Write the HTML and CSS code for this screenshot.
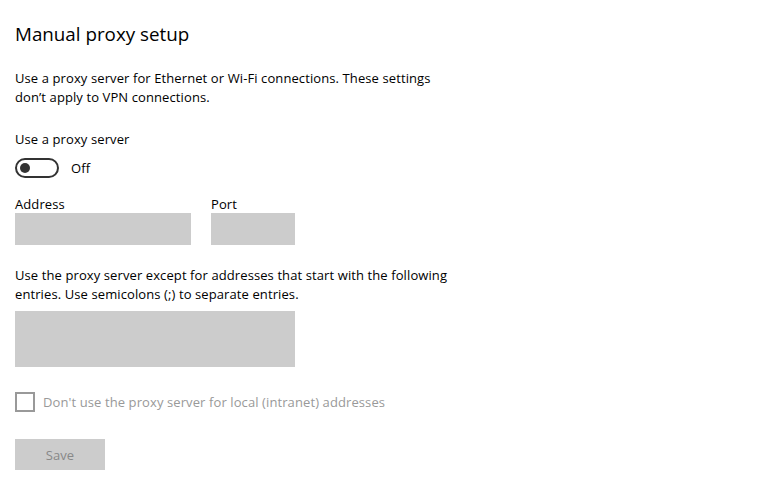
FILE: index.html
```html
<!DOCTYPE html>
<html lang="en">
<head>
<meta charset="utf-8">
<title>Manual proxy setup</title>
<link rel="stylesheet" href="styles.css">
</head>
<body>
<main class="page">
  <h1 class="title">Manual proxy setup</h1>
  <p class="desc">Use a proxy server for Ethernet or Wi-Fi connections. These settings<br>don’t apply to VPN connections.</p>
  <div class="label toggle-label">Use a proxy server</div>
  <div class="toggle-row">
    <span class="toggle"><span class="knob"></span></span>
    <span class="toggle-text">Off</span>
  </div>
  <div class="fields">
    <div class="field">
      <div class="label">Address</div>
      <div class="input address"></div>
    </div>
    <div class="field">
      <div class="label">Port</div>
      <div class="input port"></div>
    </div>
  </div>
  <p class="desc except">Use the proxy server except for addresses that start with the following<br>entries. Use semicolons (;) to separate entries.</p>
  <div class="input textarea"></div>
  <label class="check-row">
    <span class="checkbox"></span>
    <span class="check-text">Don't use the proxy server for local (intranet) addresses</span>
  </label>
  <div class="save">Save</div>
</main>
</body>
</html>
```
FILE: styles.css
```css
html, body {
  margin: 0;
  padding: 0;
  background: #ffffff;
}
body {
  font-family: "Open Sans", "Noto Sans", sans-serif;
  color: #000000;
  font-size: 13px;
  letter-spacing: 0.1px;
}
.page {
  padding: 20px 15px 0 15px;
  display: flex;
  flex-direction: column;
  align-items: flex-start;
}
.title {
  margin: 0;
  font-size: 18.8px;
  font-weight: 400;
  line-height: 28px;
  letter-spacing: 0;
}
.desc {
  margin: 0;
  line-height: 19px;
  font-size: 13px;
}
.title + .desc {
  margin-top: 21px;
}
.toggle-label {
  margin-top: 23px;
}
.label {
  line-height: 19px;
}
.toggle-row {
  display: flex;
  align-items: center;
  margin-top: 9px;
  height: 20px;
}
.toggle {
  box-sizing: border-box;
  width: 44px;
  height: 20px;
  border: 2px solid #333333;
  border-radius: 10px;
  display: flex;
  align-items: center;
  padding-left: 3px;
}
.knob {
  width: 10px;
  height: 10px;
  border-radius: 50%;
  background: #333333;
}
.toggle-text {
  margin-left: 12px;
}
.fields {
  display: flex;
  gap: 20px;
  margin-top: 17px;
}
.field .label {
  line-height: 18px;
}
.input {
  background: #cccccc;
  height: 32px;
}
.address { width: 176px; }
.port { width: 84px; }
.except {
  margin-top: 21px;
}
.textarea {
  width: 280px;
  height: 56px;
  margin-top: 7px;
}
.check-row {
  display: flex;
  align-items: center;
  margin-top: 25px;
  color: #999999;
}
.checkbox {
  box-sizing: border-box;
  width: 20px;
  height: 20px;
  border: 2px solid #999999;
}
.check-text {
  margin-left: 8px;
}
.save {
  margin-top: 27px;
  width: 90px;
  height: 31px;
  background: #cccccc;
  color: #888888;
  display: flex;
  align-items: center;
  justify-content: center;
}
```
